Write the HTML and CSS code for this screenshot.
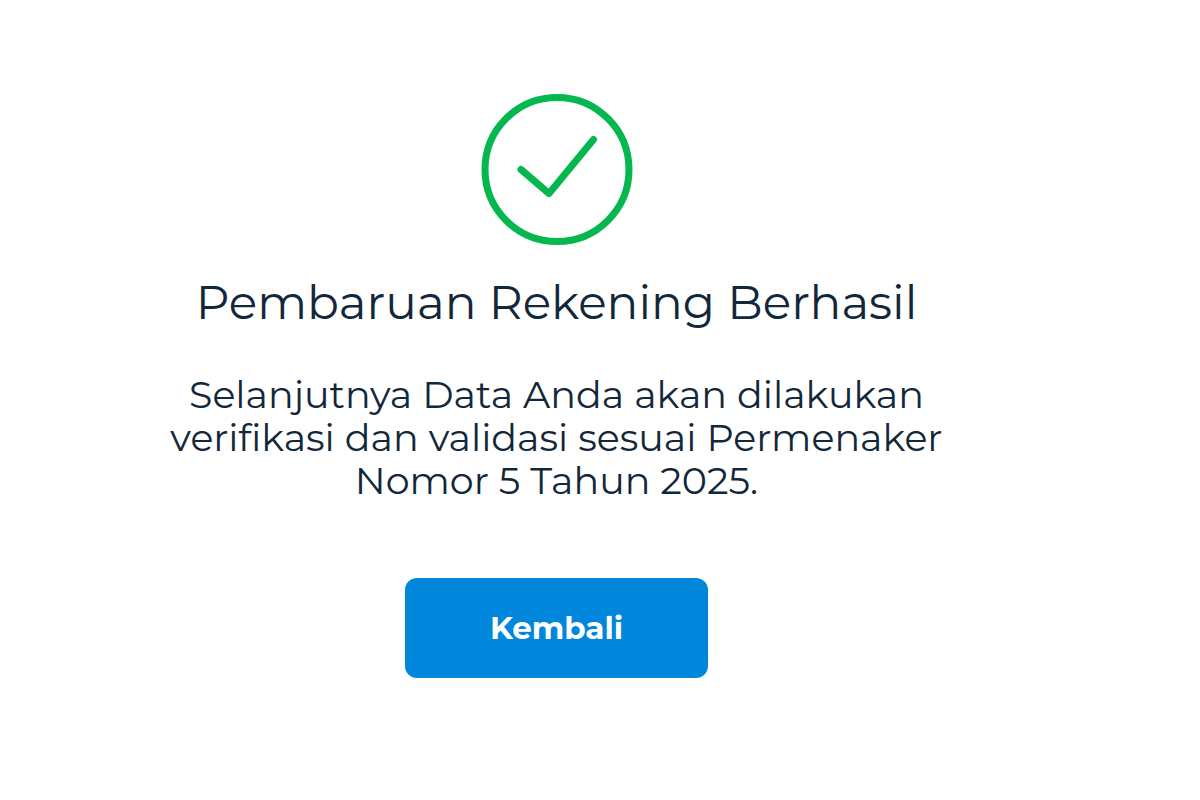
FILE: index.html
```html
<!DOCTYPE html>
<html lang="id">
<head>
  <meta charset="UTF-8" />
  <meta name="viewport" content="width=device-width, initial-scale=1.0"/>
  <title>Pembaruan Rekening</title>
  <link rel="stylesheet" href="styles.css">
</head>
<body>

<main class="result">
  <svg class="result-icon" viewBox="0 0 152 152" fill="none" aria-hidden="true">
    <circle cx="76" cy="76.5" r="72" />
    <path d="M40 76.5 L68 100.5 L112.5 46.5" />
  </svg>

  <h1>Pembaruan Rekening Berhasil</h1>

  <p>Selanjutnya Data Anda akan dilakukan<br>
  verifikasi dan validasi sesuai Permenaker<br>
  Nomor 5 Tahun 2025.</p>

  <button type="button" class="back-btn">Kembali</button>
</main>

</body>
</html>
```
FILE: styles.css
```css
* {
  box-sizing: border-box;
}

body {
  margin: 0;
  background: #ffffff;
  color: #12283a;
  font-family: Montserrat, Inter, sans-serif;
}

.result {
  display: flex;
  flex-direction: column;
  align-items: center;
  margin-right: 87px;
  padding: 93px 20px 40px;
  text-align: center;
}

.result-icon {
  width: 152px;
  height: 152px;
  stroke: #05b74f;
  stroke-width: 7;
  stroke-linecap: round;
  stroke-linejoin: round;
}

h1 {
  margin: 28px 0 0;
  font-size: 47px;
  font-weight: 400;
  line-height: 60px;
}

p {
  margin: 40px 0 0;
  font-size: 38px;
  line-height: 43px;
}

.back-btn {
  width: 303px;
  height: 100px;
  margin-top: 76px;
  border: none;
  border-radius: 12px;
  background: #0087dc;
  color: #ffffff;
  font-family: inherit;
  font-size: 31px;
  font-weight: 700;
  cursor: pointer;
}
```
